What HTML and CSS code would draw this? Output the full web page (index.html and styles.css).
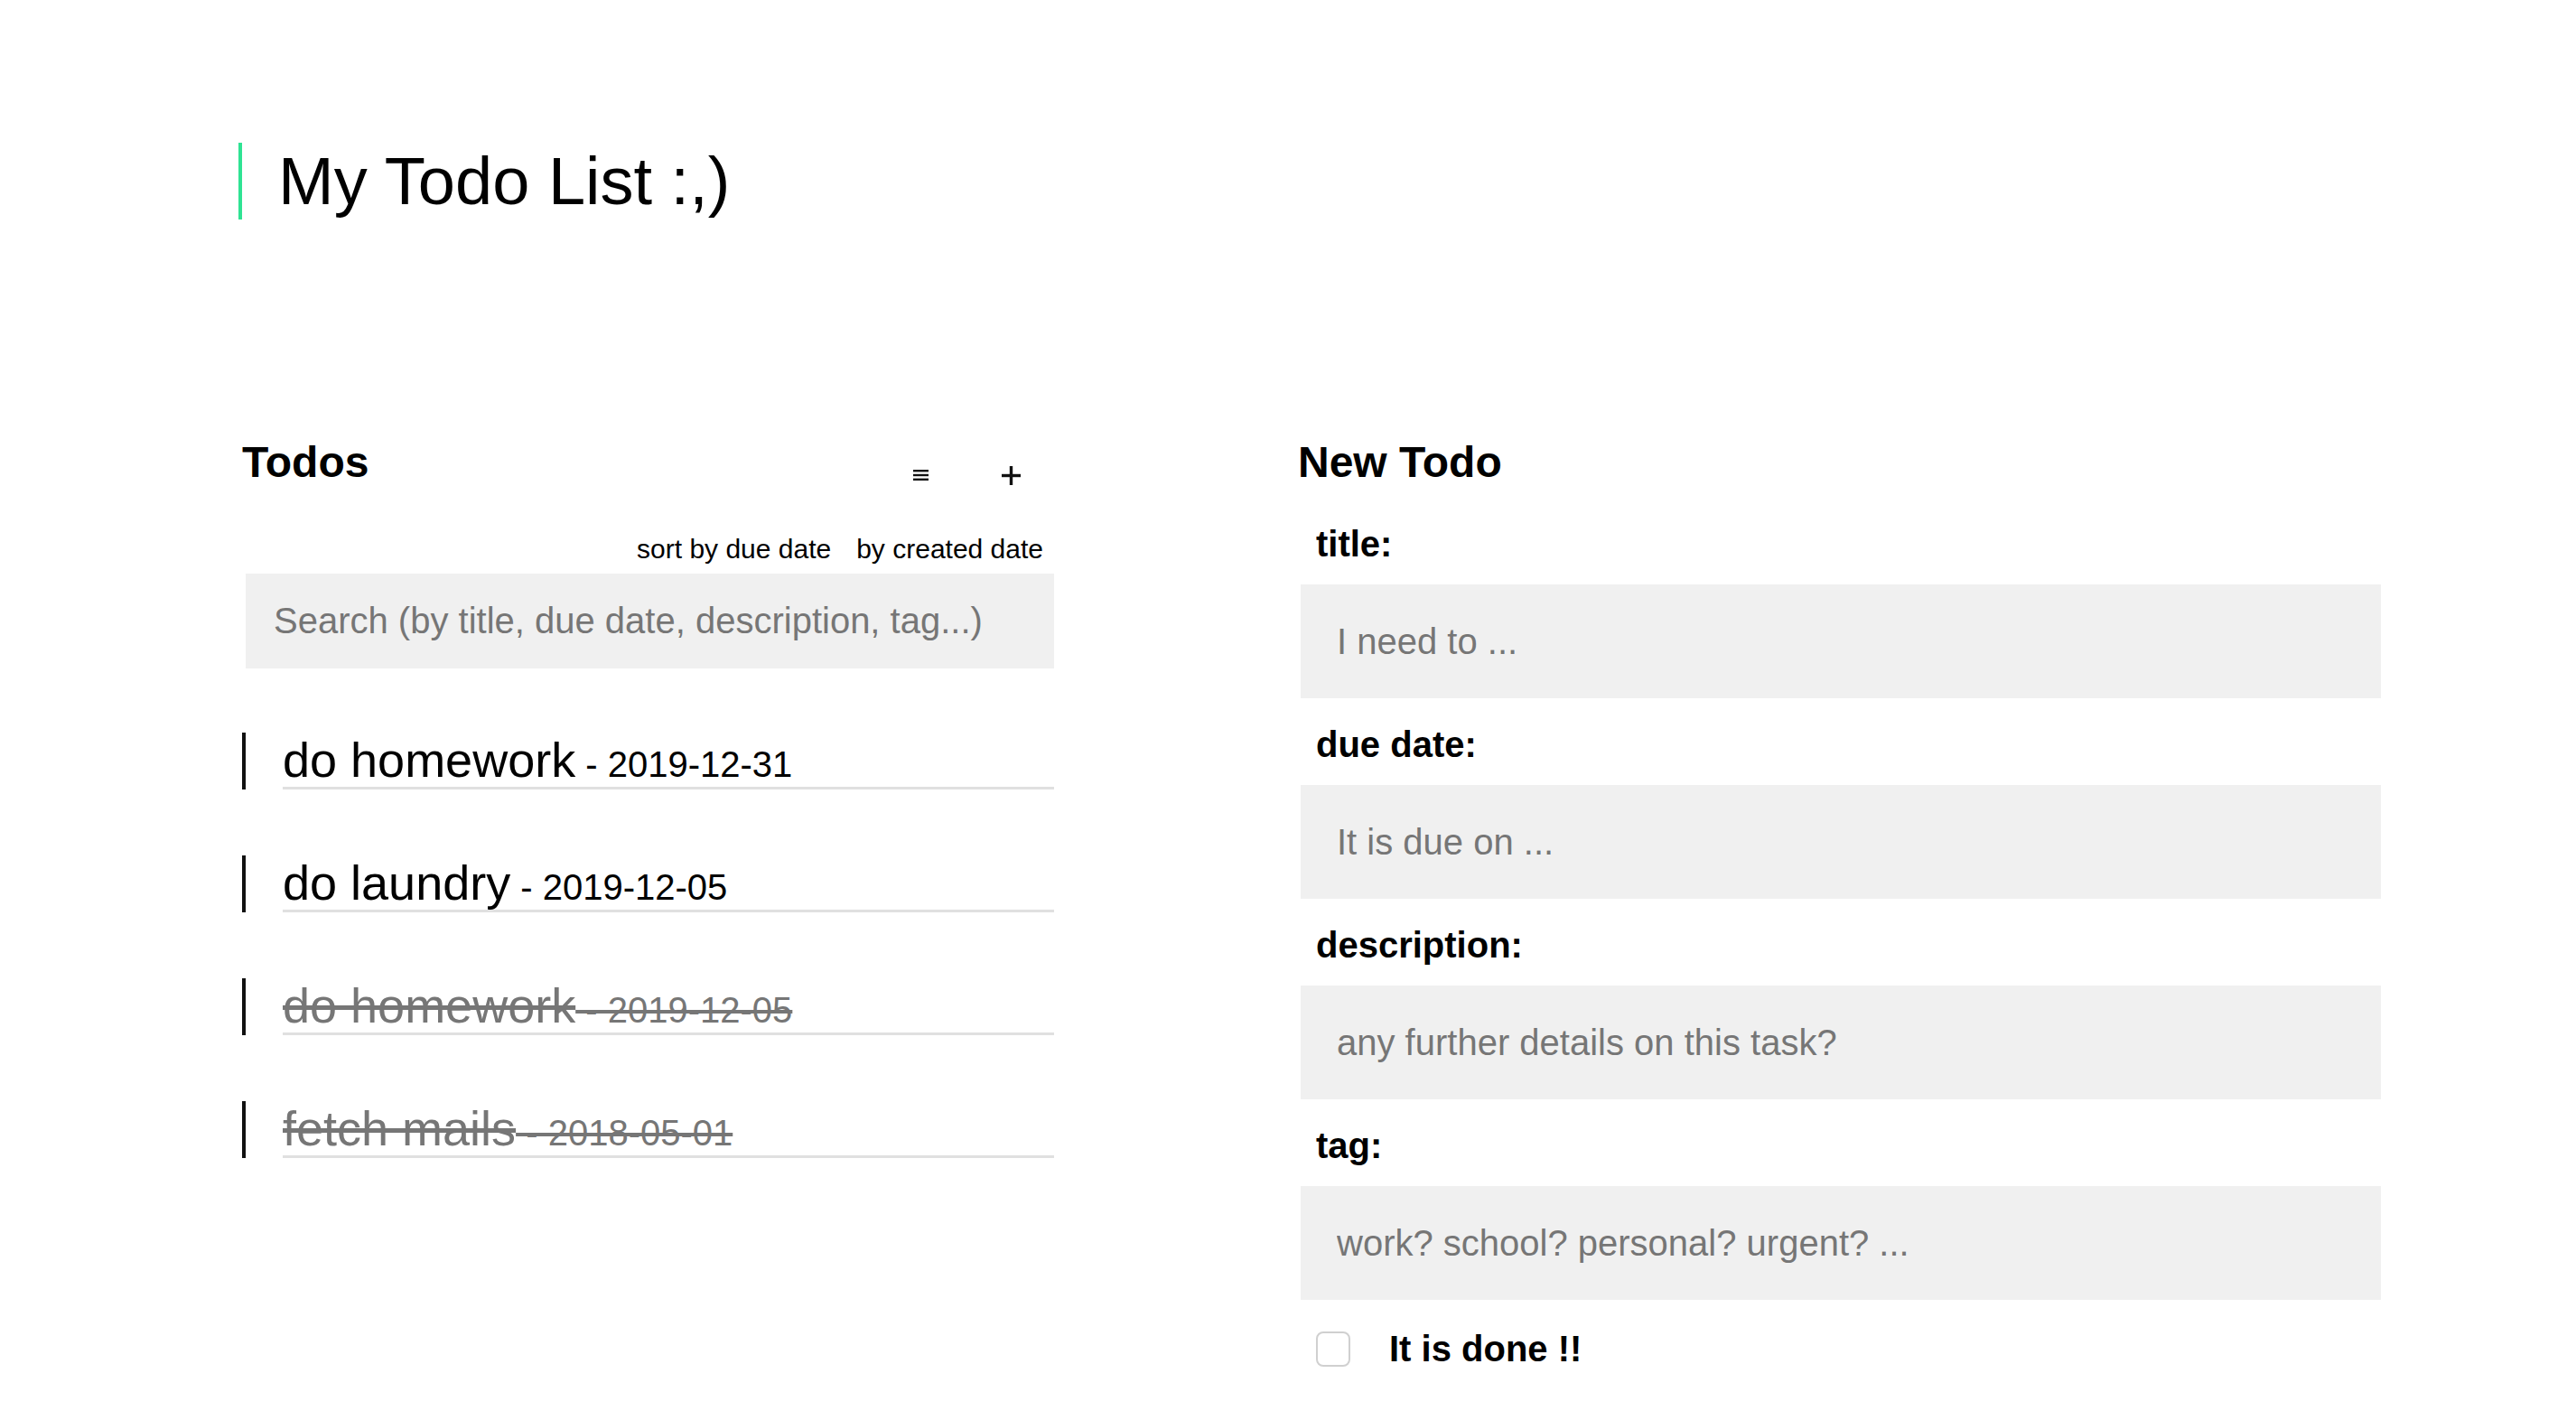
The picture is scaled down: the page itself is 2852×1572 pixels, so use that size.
FILE: index.html
```html
<!DOCTYPE html>
<html lang="en">
<head>
<meta charset="utf-8">
<title>My Todo List</title>
<link rel="stylesheet" href="styles.css">
</head>
<body>
<div class="page">
  <h1 class="title">My Todo List :,)</h1>
  <div class="columns">
    <section class="todos">
      <div class="todos-head">
        <h2 class="heading">Todos</h2>
        <div class="tools">
          <button class="tool tool-menu" aria-label="sort">
            <svg width="17" height="12" viewBox="0 0 17 12"><rect x="0" y="0" width="17" height="2.4" fill="#111"/><rect x="0" y="4.8" width="17" height="2.4" fill="#111"/><rect x="0" y="9.6" width="17" height="2.4" fill="#111"/></svg>
          </button>
          <button class="tool tool-add" aria-label="add">
            <svg width="21" height="21" viewBox="0 0 21 21"><rect x="8.8" y="0" width="3.4" height="21" fill="#111"/><rect x="0" y="8.8" width="21" height="3.4" fill="#111"/></svg>
          </button>
        </div>
      </div>
      <div class="sort-row">
        <span class="sort">sort by due date</span>
        <span class="sort">by created date</span>
      </div>
      <input class="search" type="text" placeholder="Search (by title, due date, description, tag...)">
      <ul class="todo-list">
        <li class="todo"><div class="todo-body"><span class="todo-title">do homework</span><span class="todo-date">&nbsp;- 2019-12-31</span></div></li>
        <li class="todo"><div class="todo-body"><span class="todo-title">do laundry</span><span class="todo-date">&nbsp;- 2019-12-05</span></div></li>
        <li class="todo done"><div class="todo-body"><span class="todo-title">do homework</span><span class="todo-date">&nbsp;- 2019-12-05</span></div></li>
        <li class="todo done"><div class="todo-body"><span class="todo-title">fetch mails</span><span class="todo-date">&nbsp;- 2018-05-01</span></div></li>
      </ul>
    </section>
    <section class="new-todo">
      <h2 class="heading heading-new">New Todo</h2>
      <label class="field-label first">title:</label>
      <input class="field" type="text" placeholder="I need to ...">
      <label class="field-label">due date:</label>
      <input class="field" type="text" placeholder="It is due on ...">
      <label class="field-label">description:</label>
      <input class="field" type="text" placeholder="any further details on this task?">
      <label class="field-label">tag:</label>
      <input class="field" type="text" placeholder="work? school? personal? urgent? ...">
      <div class="done-row">
        <span class="checkbox"></span>
        <span class="done-label">It is done !!</span>
      </div>
    </section>
  </div>
</div>
</body>
</html>
```

FILE: styles.css
```css
* { box-sizing: border-box; }
html, body { margin: 0; padding: 0; background: #fff; }
body {
  font-family: "Liberation Sans", Arial, Helvetica, sans-serif;
  color: #000;
}
.page {
  padding: 158px 216px 0 264px;
}
.title {
  margin: 0;
  border-left: 4px solid #2fe393;
  padding-left: 40px;
  font-size: 74px;
  font-weight: 400;
  line-height: 85px;
}
.columns {
  display: flex;
  gap: 273px;
  margin-top: 242px;
}
.todos {
  width: 903px;
  padding-left: 4px;
}
.new-todo {
  flex: 1;
}
.heading {
  margin: 0;
  font-size: 48px;
  font-weight: 700;
  line-height: 54px;
}
.heading-new { margin-left: -3px; }
.todos-head {
  display: flex;
  justify-content: space-between;
}
.tools {
  display: flex;
  align-items: center;
  height: 54px;
  padding-top: 28px;
  padding-right: 37px;
}
.tool {
  border: none;
  background: none;
  padding: 0;
  margin: 0;
  display: flex;
}
.tool-add { margin-left: 81px; }
.sort-row {
  display: flex;
  justify-content: flex-end;
  gap: 28px;
  padding-right: 12px;
  margin-top: 51px;
  font-size: 30px;
  line-height: 35px;
}
.search {
  display: block;
  width: 895px;
  height: 105px;
  margin: 10px 0 0 4px;
  border: none;
  outline: none;
  background: #f0f0f0;
  padding: 0 0 0 31px;
  font-family: inherit;
  font-size: 40px;
  color: #000;
}
.search::placeholder, .field::placeholder { color: #767676; }
.todo-list {
  list-style: none;
  margin: 71px 0 0;
  padding: 0;
}
.todo {
  display: flex;
  border-left: 4px solid #111;
  height: 63px;
  margin-bottom: 73px;
}
.todo-body {
  flex: 1;
  margin-left: 41px;
  border-bottom: 3px solid #e0e0e0;
  line-height: 60px;
  white-space: nowrap;
}
.todo-title { font-size: 54px; }
.todo-date { font-size: 40px; }
.todo.done .todo-body span {
  color: #767676;
  text-decoration: line-through;
  text-decoration-color: #767676;
}
.field-label {
  display: block;
  padding-left: 17px;
  font-size: 40px;
  font-weight: 700;
  line-height: 46px;
  margin: 28px 0 22px;
}
.field-label.first { margin-top: 40px; }
.field {
  display: block;
  width: 100%;
  height: 126px;
  border: none;
  outline: none;
  background: #f0f0f0;
  padding: 0 0 0 40px;
  font-family: inherit;
  font-size: 40px;
}
.done-row {
  display: flex;
  align-items: center;
  margin-top: 31px;
  padding-left: 17px;
}
.checkbox {
  width: 38px;
  height: 39px;
  border: 2px solid #d0d0d0;
  border-radius: 8px;
  background: #fff;
}
.done-label {
  margin-left: 43px;
  font-size: 40px;
  font-weight: 700;
  line-height: 46px;
}
```
